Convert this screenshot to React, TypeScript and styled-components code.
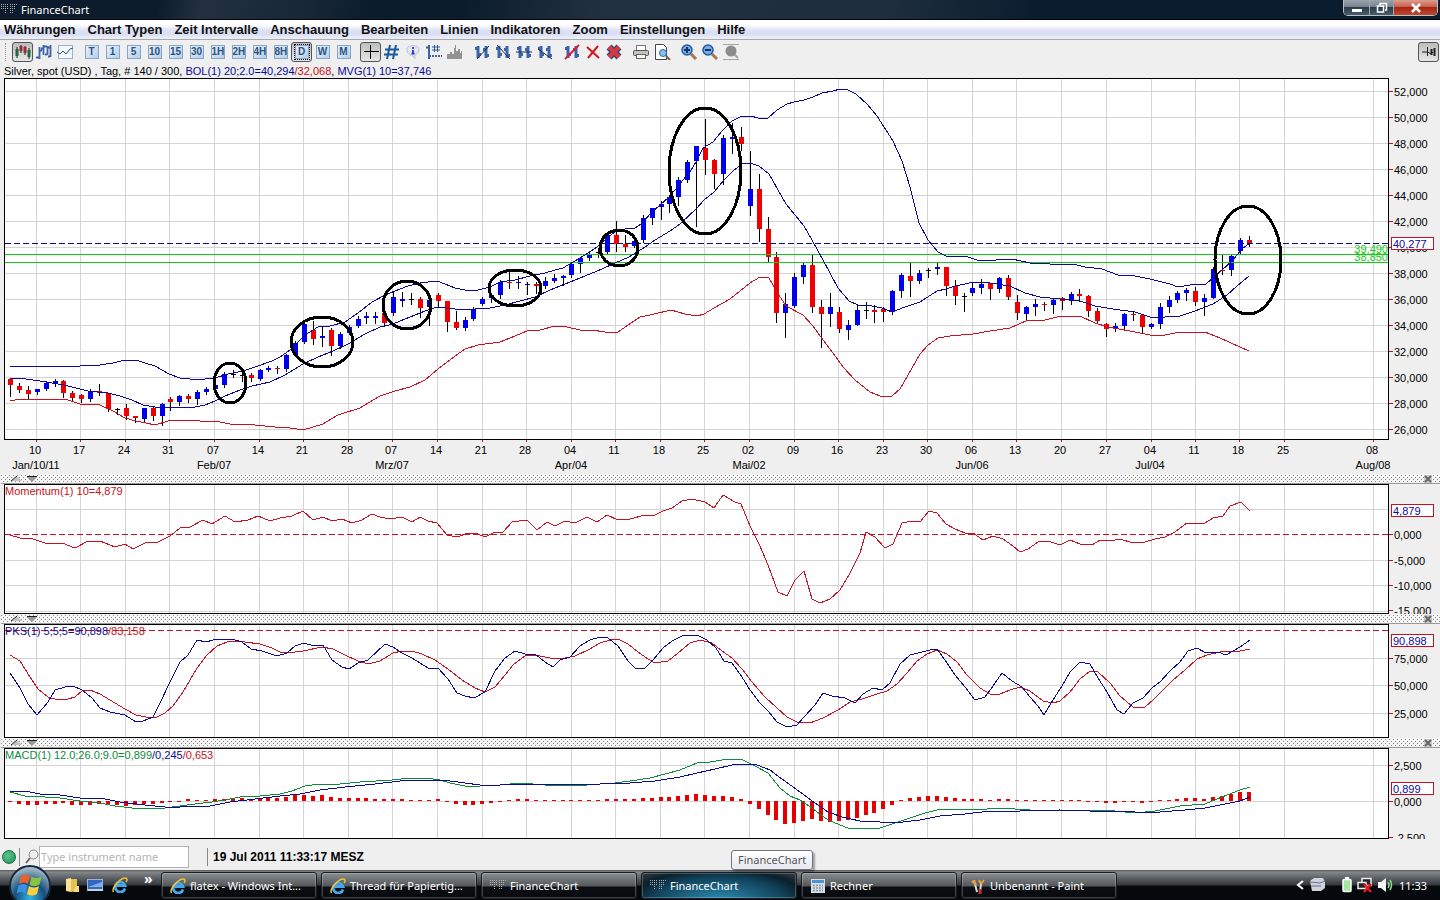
import React from "react";
import styled, { createGlobalStyle, css } from "styled-components";

const GlobalStyle = createGlobalStyle`
  * { box-sizing: border-box; }
  body { margin: 0; background: #efefef; font-family: "Liberation Sans", Arial, sans-serif; font-size: 11px; color: #000; }
  button { font: inherit; color: inherit; border: 0; background: none; padding: 0; margin: 0; }
  svg { display: block; flex: none; }
`;

const RED = "#c81020";
const BLUE = "#0a0a96";
const GREEN = "#0e8a3a";

/* ---------- series ---------- */

type Candle = [number, number, number, number, "b" | "r" | "k"];

// high, body top, body bottom, low, colour
const candles: Candle[] = [
  [379, 379, 385, 397, "r"], [383, 386, 390, 393, "r"], [386, 390, 394, 399, "r"], [389, 389, 392, 395, "b"],
  [381, 383, 389, 391, "b"], [379, 381, 384, 387, "b"], [380, 381, 393, 398, "r"], [391, 393, 398, 402, "r"],
  [394, 395, 399, 403, "r"], [389, 391, 399, 402, "b"], [384, 391, 393, 396, "r"], [393, 393, 409, 412, "r"],
  [408, 409, 410, 415, "k"], [404, 408, 416, 420, "r"], [416, 416, 418, 423, "r"], [408, 408, 419, 422, "b"],
  [407, 408, 416, 421, "r"], [403, 404, 416, 426, "b"], [397, 399, 402, 411, "r"], [395, 396, 402, 406, "b"],
  [394, 396, 399, 403, "r"], [390, 392, 399, 405, "b"], [387, 389, 392, 395, "b"], [384, 385, 389, 390, "b"],
  [372, 374, 385, 388, "b"], [370, 374, 375, 378, "k"], [373, 375, 376, 382, "k"], [373, 375, 378, 382, "r"],
  [369, 370, 379, 381, "b"], [366, 368, 370, 372, "b"], [366, 368, 369, 374, "r"], [354, 355, 369, 372, "b"],
  [341, 343, 355, 356, "b"], [321, 324, 342, 344, "b"], [321, 330, 339, 345, "r"], [327, 336, 338, 347, "b"],
  [328, 330, 346, 356, "r"], [332, 334, 346, 349, "b"], [325, 327, 333, 335, "b"], [316, 319, 326, 328, "b"],
  [312, 316, 318, 324, "b"], [312, 316, 318, 324, "b"], [311, 313, 323, 327, "r"], [292, 297, 313, 316, "b"],
  [292, 299, 301, 307, "b"], [293, 299, 300, 305, "k"], [297, 299, 308, 318, "r"], [299, 300, 307, 326, "b"],
  [293, 295, 301, 307, "r"], [301, 301, 322, 332, "r"], [311, 322, 328, 330, "r"], [317, 320, 328, 331, "b"],
  [307, 309, 319, 321, "b"], [297, 299, 304, 306, "b"], [293, 295, 298, 303, "b"], [280, 282, 295, 299, "b"],
  [272, 282, 283, 289, "r"], [276, 282, 283, 289, "b"], [282, 284, 285, 295, "b"], [282, 284, 286, 294, "r"],
  [277, 281, 286, 289, "b"], [274, 278, 281, 283, "b"], [275, 276, 278, 286, "b"], [263, 264, 275, 278, "b"],
  [257, 258, 264, 273, "b"], [251, 255, 258, 261, "b"], [248, 252, 253, 258, "k"], [233, 235, 252, 254, "b"],
  [221, 235, 244, 252, "r"], [235, 244, 247, 252, "r"], [238, 241, 246, 248, "b"], [215, 218, 240, 243, "b"],
  [208, 208, 218, 225, "b"], [201, 204, 207, 220, "b"], [195, 197, 204, 213, "b"], [177, 180, 197, 206, "b"],
  [160, 162, 180, 183, "b"], [146, 146, 161, 227, "b"], [119, 148, 160, 175, "r"], [159, 160, 174, 189, "r"],
  [135, 138, 174, 185, "b"], [123, 137, 139, 154, "b"], [127, 137, 144, 151, "r"], [151, 189, 206, 216, "b"],
  [174, 189, 229, 242, "r"], [217, 229, 257, 262, "r"], [252, 257, 313, 323, "r"], [293, 304, 313, 338, "b"],
  [273, 277, 306, 308, "b"], [263, 265, 277, 284, "b"], [255, 265, 307, 313, "r"], [300, 307, 314, 348, "r"],
  [293, 307, 314, 327, "b"], [307, 312, 329, 333, "r"], [320, 325, 330, 340, "b"], [305, 310, 325, 326, "b"],
  [302, 310, 311, 319, "k"], [305, 310, 312, 323, "r"], [307, 309, 312, 322, "r"], [290, 291, 312, 315, "b"],
  [273, 275, 291, 298, "b"], [263, 276, 281, 297, "r"], [270, 273, 281, 284, "b"], [268, 270, 271, 278, "k"],
  [263, 267, 269, 275, "b"], [267, 267, 286, 296, "r"], [280, 286, 296, 305, "r"], [293, 296, 297, 312, "k"],
  [282, 288, 293, 296, "b"], [279, 284, 288, 294, "b"], [283, 283, 289, 300, "r"], [277, 278, 289, 293, "b"],
  [275, 278, 297, 300, "r"], [295, 302, 313, 320, "r"], [306, 307, 314, 321, "b"], [299, 304, 307, 316, "b"],
  [302, 304, 305, 311, "r"], [299, 300, 305, 314, "b"], [297, 298, 301, 310, "r"], [292, 294, 301, 305, "b"],
  [289, 294, 296, 302, "r"], [295, 296, 311, 317, "r"], [308, 311, 321, 324, "r"], [323, 324, 329, 337, "r"],
  [323, 326, 328, 332, "b"], [313, 314, 326, 329, "b"], [312, 314, 315, 321, "r"], [314, 315, 327, 333, "r"],
  [323, 324, 327, 329, "b"], [303, 307, 324, 329, "b"], [296, 300, 307, 313, "b"], [291, 293, 300, 303, "b"],
  [288, 290, 293, 301, "b"], [287, 291, 302, 306, "r"], [294, 298, 302, 316, "b"], [267, 269, 298, 299, "b"],
  [255, 270, 271, 275, "r"], [255, 256, 270, 276, "b"], [238, 240, 251, 255, "b"], [236, 240, 243, 247, "r"],
];

const upperBand =
  "10,366 80,366 100,365 113,363 125,360 136,360 145,363 155,366 169,374 180,378 190,379 205,379 215,378 228,374 243,371 258,366 272,361 280,357 290,350 297,343 305,335 318,327 330,326 345,322 358,313 372,302 385,295 400,289 408,286 420,283 437,281 445,284 455,288 465,290 478,290 490,287 500,282 515,280 530,276 545,273 555,270 563,268 573,262 585,255 597,247 607,238 615,232 625,229 635,228 641,224 652,212 660,205 669,197 675,190 683,180 690,172 697,160 703,148 713,142 722,131 732,121 740,117 751,116 758,118 768,118 777,110 787,104 794,102 804,100 813,97 822,93 833,91 840,89 848,90 856,94 867,104 877,116 893,141 902,161 910,187 919,223 928,240 938,252 946,256 958,257 965,256 980,261 1012,259 1030,263 1050,264 1073,264 1085,267 1102,269 1118,275 1135,276 1150,279 1170,284 1178,287 1190,285 1206,284 1215,276 1222,270 1232,261 1242,249 1250,243";
const average =
  "10,378 26,379 40,381 52,383 64,385 76,388 88,391 108,393 120,396 132,400 143,405 155,407 170,407 190,408 205,405 215,401 225,396 240,390 252,386 270,382 285,375 303,364 318,357 333,351 348,344 365,334 380,327 393,324 400,321 415,315 425,311 437,307 455,309 475,309 490,308 505,305 520,301 535,297 550,290 565,284 585,276 602,269 615,263 629,257 645,247 655,240 670,231 680,224 697,208 704,200 714,192 724,180 733,171 742,164 750,163 759,166 769,174 786,204 804,226 812,240 823,260 838,288 849,301 858,305 872,306 882,308 892,312 905,307 920,302 937,291 946,289 955,286 965,284 973,282 990,283 1010,286 1025,293 1040,297 1060,299 1080,301 1095,306 1113,309 1135,312 1150,317 1165,317 1180,316 1195,311 1213,304 1227,295 1237,286 1249,276";
const lowerBand =
  "10,401 20,399 40,400 65,399 80,404 100,405 113,411 125,418 136,421 146,423 155,425 168,421 185,420 200,421 215,421 230,424 255,425 275,427 290,428 303,430 323,424 338,415 360,408 380,396 395,391 410,387 425,380 438,369 455,356 465,349 478,345 500,342 515,336 527,331 540,330 555,326 567,327 580,330 592,330 605,332 618,332 628,325 640,317 650,315 671,310 685,314 697,316 704,314 714,308 730,299 740,291 750,283 760,277 769,278 777,292 786,306 803,315 813,326 823,340 833,353 843,367 855,380 870,392 880,396 892,396 900,389 912,368 920,354 928,345 938,338 950,336 973,334 990,331 1010,328 1028,320 1045,320 1061,316 1080,316 1095,323 1108,327 1130,331 1150,335 1165,335 1180,332 1205,332 1220,338 1240,347 1249,351";
const momentum =
  "10,535 20,538 30,538 45,543 62,543 75,548 88,541 100,541 115,547 125,544 133,549 145,543 158,542 170,536 180,528 190,527 203,520 212,524 225,516 235,522 248,520 258,516 270,521 280,518 292,516 303,511 313,520 323,517 332,521 342,519 352,523 362,520 372,514 380,517 390,519 402,517 412,522 420,517 428,521 437,523 447,535 457,537 468,533 478,534 485,537 495,532 503,532 512,522 527,520 537,530 547,522 555,526 565,521 575,523 587,517 597,522 607,515 618,520 630,519 645,515 655,515 663,511 672,508 682,501 692,499 705,502 714,508 723,495 735,502 741,504 750,526 760,546 768,565 778,592 787,596 795,580 804,571 812,599 820,603 830,599 840,590 850,573 860,553 866,532 875,537 885,548 893,544 902,523 913,521 920,522 929,511 937,513 946,524 955,529 965,533 973,533 983,540 993,536 1003,539 1013,546 1020,552 1028,549 1038,542 1048,541 1060,545 1070,540 1080,544 1092,545 1100,540 1110,541 1120,539 1133,543 1145,542 1155,539 1165,537 1175,532 1187,523 1198,524 1205,523 1213,518 1223,516 1230,506 1241,502 1250,511";
const pksFast =
  "10,673 20,688 28,704 37,715 48,702 55,690 65,687 73,686 82,690 92,698 100,708 110,712 125,715 136,722 143,721 153,717 160,703 170,682 180,662 188,655 197,640 206,642 213,640 232,639 242,642 251,649 262,651 277,656 287,653 295,646 304,643 314,646 323,645 332,660 342,667 349,669 358,663 368,660 385,644 393,647 402,653 412,658 428,668 438,668 448,679 457,693 465,696 474,698 485,692 495,671 505,658 515,651 525,654 535,654 545,662 553,667 560,660 570,657 580,646 590,640 600,637 608,638 618,646 628,661 635,668 645,668 653,660 663,648 672,641 682,636 697,635 707,640 716,648 724,661 732,663 742,677 750,690 760,703 768,711 777,722 787,727 797,725 804,717 815,705 823,693 832,696 845,698 855,703 863,694 873,688 882,690 890,683 900,664 910,655 918,653 930,650 937,649 947,663 955,675 965,687 975,700 985,697 993,686 1002,673 1012,681 1022,687 1030,697 1038,706 1044,715 1053,700 1062,686 1070,672 1080,662 1090,664 1098,678 1107,692 1117,710 1124,714 1133,703 1143,698 1152,688 1160,682 1170,671 1180,662 1188,651 1197,648 1206,653 1218,652 1226,655 1233,651 1240,647 1250,640";
const pksSlow =
  "10,655 20,661 30,677 38,689 48,697 58,700 68,699 75,697 82,691 90,690 100,694 110,700 125,709 136,715 146,717 157,717 165,713 173,706 183,692 197,668 207,655 217,646 227,642 235,641 245,642 260,644 272,648 280,652 288,653 303,651 322,647 333,649 345,655 358,661 368,664 380,661 393,653 402,651 412,651 422,654 435,660 448,669 462,680 475,688 485,692 495,687 505,675 513,665 525,656 535,655 545,657 555,659 565,658 575,656 590,649 600,643 610,640 618,639 628,644 638,652 648,659 655,663 668,661 678,653 690,643 700,640 712,643 722,651 732,658 742,669 752,682 765,697 777,708 787,717 797,722 810,723 823,718 838,710 850,702 862,699 877,694 887,691 897,684 907,673 917,661 927,654 937,650 947,654 957,662 967,675 980,688 990,694 1000,694 1010,690 1020,687 1030,691 1043,701 1053,703 1060,701 1070,692 1080,679 1090,671 1098,672 1110,683 1120,696 1133,707 1145,707 1153,700 1163,690 1173,680 1185,670 1197,659 1207,655 1220,652 1240,651 1250,649";
const macdLine =
  "10,792 25,796 45,797 60,798 80,801 100,803 115,806 132,808 145,809 165,808 180,806 195,804 212,802 225,800 240,797 260,796 280,794 292,791 305,786 320,784 340,784 360,782 392,780 410,778 425,778 440,780 450,783 465,786 480,786 500,785 520,783 545,785 575,786 600,784 615,783 630,781 650,778 665,774 680,770 697,763 710,762 722,760 735,759 743,760 755,766 768,773 780,788 790,796 800,800 812,808 825,818 835,823 848,828 865,829 880,828 895,823 910,818 925,813 937,810 955,809 975,810 1000,808 1030,810 1060,810 1090,810 1115,811 1135,813 1155,811 1180,806 1205,804 1222,797 1240,790 1250,787";
const macdSignal =
  "10,791 25,791 40,794 60,795 80,798 105,799 120,802 145,805 165,807 180,807 210,806 230,802 255,799 280,796 300,794 320,790 345,787 375,784 400,781 430,780 450,781 465,783 480,785 500,785 530,784 570,784 600,784 630,783 655,781 680,777 697,773 715,769 732,765 745,764 757,765 770,770 782,779 800,792 815,803 828,812 842,817 860,821 880,822 903,822 920,820 940,816 965,814 990,811 1020,811 1060,810 1090,811 1115,811 1135,812 1160,812 1185,810 1205,808 1225,804 1240,801 1250,797";
const histogram = [
  -1, -3, -4, -4, -3, -3, -2, -4, -4, -4, -3, -4, -4, -5, -4, -3, -3, -2, -1, -1, 2, 1, 1, 2, 2, 3, 3, 2, 3, 3, 3, 4, 6, 6,
  5, 6, 4, 3, 3, 3, 3, 2, 2, 2, 2, 1, 1, 1, 2, -1, -3, -4, -4, -3, -2, -1, 1, 2, 2, 1, 1, 1, 1, 1, 1, 1, 1, 2, 2, 2, 2,
  3, 3, 4, 4, 5, 6, 7, 6, 5, 5, 4, 2, -3, -8, -14, -19, -23, -22, -20, -18, -20, -21, -20, -19, -17, -14, -12, -8, -4,
  1, 3, 4, 5, 5, 4, 3, 2, 2, 2, 1, 2, 2, 1, 1, 1, 1, 1, 1, 1, 1, -1, -1, -2, -2, -1, -1, -2, -1, 1, 1, 2, 3, 3, 2, 4,
  5, 7, 9, 9,
];

const gridX = [
  36, 80, 125, 169, 214, 259, 303, 348, 392, 437, 482, 526, 571, 615, 660, 704, 749, 794, 838, 883, 927, 972, 1016, 1061,
  1106, 1151, 1195, 1239, 1284, 1373,
];
const days =
  "10 17 24 31 07 14 21 28 07 14 21 28 04 11 18 25 02 09 16 23 30 06 13 20 27 04 11 18 25 08".split(" ");
const months: [number, string][] = [
  [36, "Jan/10/11"], [214, "Feb/07"], [392, "Mrz/07"], [571, "Apr/04"], [749, "Mai/02"], [972, "Jun/06"],
  [1150, "Jul/04"], [1373, "Aug/08"],
];
const markers: [number, number, number, number][] = [
  [230, 383, 16, 20], [322, 342, 31, 25], [407, 305, 24, 24], [515, 288, 26, 18], [619, 248, 19, 18], [705, 171, 36, 63],
  [1248, 260, 33, 54],
];
const X0 = 5;
const SPAN = 1383;
const barX = (i: number) => Math.round(10 + i * 8.912);

/* ---------- window frame ---------- */

const Window = styled.div`
  min-height: 100vh;
  display: flex;
  flex-direction: column;
`;
const TitleBar = styled.header`
  height: 20px;
  padding-left: 1px;
  display: flex;
  align-items: center;
  gap: 4px;
  color: #fff;
  font: 11px "Noto Sans", "Open Sans", sans-serif;
  border-bottom: 1px solid #04070b;
  background: linear-gradient(100deg, #0c1c2d 0 11%, #22303f 14%, #162635 22%, #0b1c2c 26%, #0b1c2c 32%, #223140 42%, #1d2d3d 62%, #0a1d2e 72%, #0a1d2e 100%);
`;
const Caption = styled.div`
  margin-left: auto;
  margin-right: 2px;
  align-self: flex-start;
  display: flex;
  height: 16px;
  border: 1px solid #b6bfc6;
  border-top: 0;
  border-radius: 0 0 5px 5px;
  overflow: hidden;
`;
const CaptionButton = styled.button<{ $wide?: boolean; $close?: boolean }>`
  width: ${(p) => (p.$close ? 43 : p.$wide ? 26 : 24)}px;
  display: flex;
  align-items: center;
  justify-content: center;
  border-right: ${(p) => (p.$close ? 0 : "1px solid #9aa5ae")};
  background: ${(p) =>
    p.$close
      ? "linear-gradient(#dc9c90, #c4614f 45%, #a82414 50%, #c04a30)"
      : "linear-gradient(#9aa4ac, #76828d 45%, #2c3c4b 50%, #4c5c6a)"};
`;
const MenuBar = styled.nav`
  height: 20px;
  padding-left: 4px;
  display: flex;
  align-items: center;
  gap: 12px;
  font: bold 13px "Liberation Sans", Arial, sans-serif;
  color: #111;
  background: linear-gradient(#fff 0 25%, #dce1f4 55%, #d9dff3 75%, #eef0fa);
  border-bottom: 1px solid #aaa;
`;
const ToolBar = styled.div`
  height: 24px;
  padding-left: 5px;
  display: flex;
  align-items: center;
  gap: 6px;
  background: #efefef;
`;
const Grip = styled.span`
  width: 1px;
  height: 18px;
  border-left: 1px dotted #999;
`;
const ToolGroup = styled.div`
  display: flex;
`;
const ToolButton = styled.button<{ $on?: boolean }>`
  width: 21px;
  height: 20px;
  display: flex;
  align-items: center;
  justify-content: center;
  border-radius: 3px;
  ${(p) =>
    p.$on &&
    css`
      border: 1px solid #555;
      background: linear-gradient(#bdbdbd, #e6e6e6);
    `}
`;
const Interval = styled.span<{ $on?: boolean }>`
  width: 14px;
  height: 14px;
  text-align: center;
  overflow: hidden;
  font: bold 10px/12px "Liberation Sans", Arial, sans-serif;
  color: #2b5480;
  background: linear-gradient(135deg, #e8f1fb, #b6cee8);
  border: 1px solid #86a6ca;
  outline: ${(p) => (p.$on ? "1px dotted #000" : "none")};
`;
const Pin = styled(ToolButton)`
  margin-left: auto;
  margin-right: 1px;
`;
const InfoLine = styled.p`
  margin: 0;
  height: 14px;
  line-height: 14px;
  padding-left: 4px;
`;
const Ink = styled.span<{ $c: string }>`
  color: ${(p) => p.$c};
`;

/* ---------- chart panels ---------- */

const Charts = styled.main`
  flex: 1;
`;
const PanelRow = styled.section`
  display: flex;
  margin-left: 4px;
`;
const Plot = styled.div<{ $h: number }>`
  position: relative;
  flex: 1;
  height: ${(p) => p.$h}px;
  border: 1px solid #000;
  background: #fff;
`;
const Drawing = styled.svg`
  width: 100%;
  height: 100%;
  overflow: hidden;
  shape-rendering: crispEdges;
`;
const PanelLabel = styled.span`
  position: absolute;
  left: 0;
  top: 0;
  line-height: 12px;
`;
const LevelLabel = styled.span<{ $top: number }>`
  position: absolute;
  right: 0;
  top: ${(p) => p.$top}px;
  line-height: 12px;
  color: #14c814;
`;
const Axis = styled.svg`
  flex: none;
  width: 51px;
  overflow: hidden;
  font-size: 11px;
  rect, path { shape-rendering: crispEdges; }
`;
const DateAxis = styled.svg`
  width: calc(100% - 57px);
  height: 34px;
  margin-left: 5px;
  overflow: visible;
  font-size: 11px;
  text-anchor: middle;
`;
const Splitter = styled.div`
  height: 10px;
  margin-left: 1px;
  padding: 0 8px 0 10px;
  display: flex;
  align-items: center;
  gap: 4px;
  border-bottom: 1px solid #999;
  background-color: #f4f4f4;
  background-image: conic-gradient(from 270deg at 1px 1px, #8a8a8a 90deg, transparent 0), conic-gradient(from 270deg at 1px 1px, #8a8a8a 90deg, transparent 0);
  background-size: 4px 4px;
  background-position: 0 1px, 2px 3px;
  svg:last-child { margin-left: auto; }
`;

const line = { fill: "none", vectorEffect: "non-scaling-stroke" } as const;

function Grid({ top, height, levels }: { top: number; height: number; levels: number[] }) {
  return (
    <g fill="#d4d4d4">
      {gridX.map((x) => (
        <rect key={x} x={x} y={top} width="1" height={height} />
      ))}
      {levels.map((y) => (
        <rect key={y} x={X0} y={y} width={SPAN} height="1" />
      ))}
    </g>
  );
}

interface PanelProps {
  top: number;
  height: number;
  levels: number[];
  labels: [number, string][];
  current: [number, string];
  title?: React.ReactNode;
  overlay?: React.ReactNode;
  children: React.ReactNode;
}

function Panel({ top, height, levels, labels, current, title, overlay, children }: PanelProps) {
  return (
    <PanelRow>
      <Plot $h={height}>
        <Drawing viewBox={`${X0} ${top + 1} ${SPAN} ${height - 2}`} preserveAspectRatio="none">
          <Grid top={top} height={height} levels={levels} />
          {children}
        </Drawing>
        {title && <PanelLabel>{title}</PanelLabel>}
        {overlay}
      </Plot>
      <Axis viewBox={`1389 ${top} 51 ${height}`} height={height}>
        {labels.map(([y, text]) => (
          <g key={text}>
            <path d={`M1389 ${y + 0.5}h4`} stroke={RED} />
            <text x="1394" y={y + 5}>{text}</text>
          </g>
        ))}
        <rect x="1391.5" y={current[0] - 5.5} width="42" height="12" fill="#fff" stroke={RED} />
        <text x="1393" y={current[0] + 5} fill={BLUE}>{current[1]}</text>
      </Axis>
    </PanelRow>
  );
}

function PanelSplitter() {
  return (
    <Splitter>
      <svg width="12" height="6"><path d="M0 5L6 0L11 5z" fill="#c4c4c4" /><path d="M0 5L6 0" stroke="#222" /></svg>
      <svg width="12" height="6"><path d="M0 1h10L5 6z" fill="#999" /><path d="M0 .5h10" stroke="#222" /></svg>
      <svg width="8" height="8"><rect width="8" height="8" fill="#ccc" /><path d="M1 1l6 6M7 1l-6 6" stroke="#666" strokeWidth="2" /></svg>
    </Splitter>
  );
}

/* ---------- status line and task bar ---------- */

const StatusBar = styled.footer`
  position: relative;
  height: 31px;
  display: flex;
  align-items: center;
  padding: 4px 0 0 2px;
`;
const Led = styled.span`
  width: 14px;
  height: 14px;
  border-radius: 50%;
  border: 1px solid #1c7044;
  background: radial-gradient(circle at 40% 40%, #5cc890, #189058);
`;
const Divider = styled.span`
  width: 1px;
  height: 18px;
  margin: 0 5px 0 3px;
  background: #888;
`;
const Search = styled.input`
  width: 150px;
  height: 22px;
  padding: 0 1px;
  border: 1px solid #b4b4b4;
  background: #fff;
  font: 11px "Noto Sans", "Open Sans", sans-serif;
  margin-right: 15px;
  &::placeholder { color: #b4b4b4; opacity: 1; }
`;
const Clock = styled.time`
  font: bold 12px "Liberation Sans", Arial, sans-serif;
`;
const Tooltip = styled.div`
  position: absolute;
  left: 731px;
  top: 11px;
  height: 20px;
  padding: 0 6px;
  line-height: 17px;
  border: 1px solid #767676;
  border-radius: 3px;
  background: linear-gradient(#fff, #e6e8f2);
  box-shadow: 2px 2px 2px #0005;
  color: #575757;
  font-family: "Noto Sans", sans-serif;
  font-size: 11px;
`;
const TaskBar = styled.div`
  height: 30px;
  display: flex;
  align-items: stretch;
  color: #fff;
  font: 11px "Noto Sans", "Open Sans", sans-serif;
  background: linear-gradient(#55595c, #85888b 2px, #5c6064 8px, #34383c 15px, #06090c 16px, #05080c);
`;
const StartButton = styled.button`
  width: 58px;
  height: 30px;
  overflow: visible;
  position: relative;
  svg { position: absolute; left: 8px; top: -5px; }
`;
const QuickLaunch = styled.div`
  width: 103px;
  padding: 0 8px 0 7px;
  display: flex;
  align-items: center;
  gap: 8px;
  b { margin-left: 8px; align-self: flex-start; font-size: 14px; line-height: 18px; }
`;
const Tasks = styled.div`
  display: flex;
  gap: 4px;
  padding: 2px 0 1px;
`;
const Task = styled.button<{ $on?: boolean }>`
  width: 156px;
  padding: 0 7px;
  display: flex;
  align-items: center;
  gap: 4px;
  white-space: nowrap;
  border: 1px solid #1a1d20;
  border-radius: 3px;
  box-shadow: inset 0 0 0 1px #ffffff38;
  background: ${(p) =>
    p.$on
      ? "radial-gradient(ellipse at 50% 110%, #2b8db4, #11425a 60%, #0a202c 80%, #0000), linear-gradient(#3a3e42, #22303a)"
      : "linear-gradient(#8b8e90, #54585b 13px, #0c0f13 14px, #07090d)"};
`;
const TaskIcon = styled.span`
  width: 17px;
  display: flex;
  justify-content: center;
`;
const Tray = styled.div`
  margin-left: auto;
  padding-right: 13px;
  display: flex;
  align-items: center;
  gap: 4px;
`;
const TrayClock = styled.time`
  margin-left: 2px;
`;
const Gap = styled.span`
  width: 7px;
`;

/* ---------- icons ---------- */

const C = "#3c64a8";
const icon = (children: React.ReactNode, w = 18, h = 16) => (
  <svg width={w} height={h} viewBox={`0 0 ${w} ${h}`} fill="none">{children}</svg>
);

const CandleIcon = icon(
  <>
    <path d="M3 3v11M7 1v8M11 2v9M15 4v11" stroke="#222" />
    <path d="M3 5v7M15 6v7" stroke="#1d6b3a" strokeWidth="3" />
    <path d="M7 2v5M11 3v6" stroke="#a02838" strokeWidth="3" />
  </>
);
const BarsIcon = icon(
  <path d="M4.500 3v12M1 13.500h3M4 6.500h3M8.500 1v10M6 4.500h2M8 2.500h4M12.500 2v9M10 10.500h2M15.500 1v12M13 3.500h2M13 12.500h2" stroke={C} strokeWidth="1.800" />
);
const LineIcon = icon(
  <>
    <rect x="2.500" y="1.500" width="14" height="13" stroke="#9ab4d4" fill="#f4f8fc" />
    <path d="M1 8l3 2 3-3 3 3 4-5 3-1" stroke="#2c5888" />
  </>
);
const CrossIcon = icon(<path d="M8.500 1v14M2 7.500h15" stroke="#000" />);
const HashIcon = icon(<path d="M7 1L4 15M13 1l-3 14M2 5.500h14M1 10.500h14" stroke="#185a9c" strokeWidth="2" />);
const InfoIcon = icon(
  <>
    <path d="M9 1.500c4 0 6 2 6 4.500s-2 4-4 4.500v4L8 11c-3 0-5-2-5-5s2-4.500 6-4.500z" fill="#e4e7f2" stroke="#bcc0d0" />
    <path d="M9 3v2M9 6v4M7.500 9.500h3" stroke="#2838d8" strokeWidth="1.800" />
  </>
);
const BarHashIcon = icon(
  <>
    <path d="M4 1v14M1 3.500h3M4 12h2" stroke={C} strokeWidth="2" />
    <path d="M9.500 1v7M12.500 1v7M7 3h8M7 6h8" stroke="#2c5c98" />
    <path d="M7 12h10" stroke={C} strokeWidth="2" strokeDasharray="2 1" />
  </>
);
const VolumeIcon = icon(<path d="M1 15v-5h3V8h2v2h2V4h1V1h1v6h2V5h2v4h1V7h1v8z" fill="#929292" />);
const pair = <path d="M5 2v12M2 4.500h3M5 10.500h3M13 2v12M10 5.500h3M13 11.500h3" stroke={C} strokeWidth="3" />;
const TrendIcon = icon(<>{pair}<path d="M4 15L16 2" stroke="#1c2c50" /></>);
const DownIcon = icon(<>{pair}<path d="M3 1l13 14" stroke="#1c2c50" /></>);
const LevelIcon = icon(<>{pair}<path d="M1 8h16" stroke="#1c2c50" /></>);
const RayIcon = icon(<>{pair}<path d="M2 5l14 10" stroke="#1c2c50" /></>);
const CutIcon = icon(<>{pair}<path d="M2 15L16 1" stroke="#d81c3c" strokeWidth="2" /></>);
const DeleteIcon = icon(<path d="M3 3l12 11M14 2L4 14" stroke="#d01828" strokeWidth="2" />);
const DeleteAllIcon = icon(
  <>
    <path d="M4 3l10 10M14 3L4 13" stroke="#384a80" strokeWidth="7" />
    <path d="M4 3l10 10M14 3L4 13" stroke="#d83840" strokeWidth="4" />
  </>
);
const PrintIcon = icon(
  <>
    <rect x="4.500" y="1.500" width="9" height="5" fill="#fff" stroke="#777" />
    <rect x="1.500" y="6.500" width="15" height="5" rx="1" fill="#c0c4c0" stroke="#555" />
    <rect x="4.500" y="10.500" width="9" height="4" fill="#f4f4f4" stroke="#666" />
  </>
);
const PreviewIcon = icon(
  <>
    <path d="M2.500 .5h8l3 3v12h-11z" fill="#fff" stroke="#445" />
    <circle cx="10" cy="9" r="3.500" fill="#8cc0ec" stroke="#2c68a8" />
    <path d="M13 12l4 4" stroke="#786048" strokeWidth="2" />
  </>
);
const zoomIcon = (plus: boolean) =>
  icon(
    <>
      <path d="M11 10l5 5" stroke="#a87848" strokeWidth="3" />
      <circle cx="7" cy="6" r="5" fill="#74b0e8" stroke="#2458a0" strokeWidth="1.500" />
      <path d={plus ? "M4 6h6M7 3v6" : "M4 6h6"} stroke="#143468" strokeWidth="2" />
    </>
  );
const ZoomResetIcon = icon(
  <>
    <path d="M1 .5h16M1 15.500h16" stroke="#a4a4a4" />
    <path d="M12 10l4 4" stroke="#a4a4a4" strokeWidth="2" />
    <circle cx="9" cy="7" r="5.500" fill="#8c8c8c" />
  </>
);
const PinIcon = icon(
  <>
    <path d="M1 8h5M6.500 3v9M7 8l3 2 2-2" stroke="#222" />
    <path d="M10.500 5v6M13.500 4v8" stroke="#222" strokeWidth="2" />
  </>,
  16
);
const DotsIcon = (
  <svg width="16" height="14">
    {[0, 1, 2, 3, 4].map((r) => (
      <path key={r} d={`M${r > 2 ? 4 : 0} ${r * 2 + 1.5}h${r > 2 ? 2 : 7}M9 ${r * 2 + 1.5}h${7 - r}`} stroke="#a8aeb4" strokeDasharray="1 1" />
    ))}
  </svg>
);
const IeIcon = (
  <svg width="16" height="16" viewBox="0 0 16 16" fill="none">
    <path d="M13 11.500A5 5 0 1 1 13 8.500H4" stroke="#45a8ec" strokeWidth="2.800" />
    <path d="M1.500 15C-1 11 10-1 14.500 1.500c1 .8 .6 2-.5 3.500" stroke="#f4c22c" strokeWidth="1.500" />
  </svg>
);
const StartIcon = (
  <svg width="43" height="35" viewBox="0 0 43 35">
    <defs>
      <radialGradient id="orb" cx="50%" cy="80%" r="75%">
        <stop offset="0" stopColor="#34b4e8" />
        <stop offset=".5" stopColor="#174e7c" />
        <stop offset="1" stopColor="#a4bccb" />
      </radialGradient>
    </defs>
    <circle cx="22" cy="21" r="20" fill="url(#orb)" stroke="#16283a" strokeWidth="2" />
    <path d="M13 11c3-2 6-2 9 0l-2 8c-3-2-6-2-9 0z" fill="#e8602c" />
    <path d="M23.500 11.500c3 2 6 2 10 0l-2 8c-4 2-7 2-10 0z" fill="#88c440" />
    <path d="M10.500 20.500c3-2 6-2 9 0l-2 8c-3-2-6-2-9 0z" fill="#3c90e0" />
    <path d="M21 21c3 2 6 2 10 0l-2 8c-4 2-7 2-10 0z" fill="#fcd03c" />
  </svg>
);
const FolderIcon = (
  <svg width="14" height="16"><path d="M1 2l5-1v14l-5-1z" fill="#f8e494" /><path d="M6 2h6v12l-6 1z" fill="#e4c050" /><path d="M11 9h3v6H8z" fill="#f4dc84" /></svg>
);
const DesktopIcon = (
  <svg width="17" height="14"><rect x=".5" y="1.500" width="15" height="11" fill="#3468c0" stroke="#9cb4d4" /><path d="M1 9L15 4v5z" fill="#7cb0e8" /><path d="M1 12h15" stroke="#c4d0dc" strokeWidth="2" /></svg>
);
const CalcIcon = (
  <svg width="14" height="14"><rect width="14" height="14" fill="#d4dce4" /><rect x="1" y="1" width="12" height="3" fill="#4c94d8" /><path d="M2 6.500h10M2 9h10M2 11.500h10" stroke="#8c98a4" strokeWidth="1.500" strokeDasharray="2 1" /></svg>
);
const PaintIcon = (
  <svg width="14" height="16" fill="none"><path d="M4 6l2 8M10 6L9 14" stroke="#ddd" strokeWidth="2" /><path d="M1 3l4 4M3 2l2 5M8 2l2 4M13 2l-3 4" stroke="#e8a040" strokeWidth="2" /><path d="M9 11v5" stroke="#b83828" strokeWidth="3" /></svg>
);

const toolGroups: { label: string; on?: boolean; glyph?: React.ReactNode }[][] = [
  [{ label: "Kerzen", on: true, glyph: CandleIcon }, { label: "Balken", glyph: BarsIcon }, { label: "Linie", glyph: LineIcon }],
  ["T", "1", "5", "10", "15", "30", "1H", "2H", "4H", "8H", "D", "W", "M"].map((label) => ({ label, on: label === "D" })),
  [
    { label: "Fadenkreuz", on: true, glyph: CrossIcon }, { label: "Raster", glyph: HashIcon }, { label: "Info", glyph: InfoIcon },
    { label: "Werte", glyph: BarHashIcon }, { label: "Volumen", glyph: VolumeIcon },
  ],
  [
    { label: "Trendlinie", glyph: TrendIcon }, { label: "Linie abwärts", glyph: DownIcon },
    { label: "Horizontale", glyph: LevelIcon }, { label: "Strahl", glyph: RayIcon },
  ],
  [{ label: "Trennen", glyph: CutIcon }, { label: "Löschen", glyph: DeleteIcon }, { label: "Alle löschen", glyph: DeleteAllIcon }],
  [{ label: "Drucken", glyph: PrintIcon }, { label: "Vorschau", glyph: PreviewIcon }],
  [{ label: "Vergrößern", glyph: zoomIcon(true) }, { label: "Verkleinern", glyph: zoomIcon(false) }, { label: "Zoom zurücksetzen", glyph: ZoomResetIcon }],
];
const menus = ["Währungen", "Chart Typen", "Zeit Intervalle", "Anschauung", "Bearbeiten", "Linien", "Indikatoren", "Zoom", "Einstellungen", "Hilfe"];
const tasks: { text: string; glyph: React.ReactNode; on?: boolean }[] = [
  { text: "flatex - Windows Int...", glyph: IeIcon },
  { text: "Thread für Papiertig...", glyph: IeIcon },
  { text: "FinanceChart", glyph: DotsIcon },
  { text: "FinanceChart", glyph: DotsIcon, on: true },
  { text: "Rechner", glyph: CalcIcon },
  { text: "Unbenannt - Paint", glyph: PaintIcon },
];
const priceLabels: [number, string][] = Array.from({ length: 14 }, (_, i) => [91 + i * 26, `${52 - i * 2},000`]);

function Candles() {
  return (
    <>
      {candles.map(([hi, top, bottom, lo, c], i) => (
        <g key={i}>
          <rect x={barX(i)} y={hi} width="1" height={lo - hi} fill="#000" />
          <rect x={barX(i) - 2} y={top} width="5" height={bottom - top} fill={c === "b" ? "#0000f0" : c === "r" ? "#f00000" : "#000"} />
        </g>
      ))}
    </>
  );
}

function DateScale() {
  const at = (x: number) => `${((x - X0) / SPAN) * 100}%`;
  return (
    <DateAxis>
      {gridX.map((x, i) => (
        <g key={x}>
          <rect x={at(x)} y="0" width="1" height="2" fill={RED} />
          <text x={at(x - 1)} y="14">{days[i]}</text>
        </g>
      ))}
      {months.map(([x, text]) => (
        <text key={text} x={at(x)} y="29">{text}</text>
      ))}
    </DateAxis>
  );
}

export default function App() {
  return (
    <Window>
      <GlobalStyle />
      <TitleBar>
        {DotsIcon}
        <span>FinanceChart</span>
        <Caption>
          <CaptionButton $wide aria-label="Minimieren">
            <svg width="12" height="12"><rect x="1" y="7" width="10" height="3" fill="#fff" /></svg>
          </CaptionButton>
          <CaptionButton aria-label="Wiederherstellen">
            <svg width="12" height="12" fill="none" stroke="#fff" strokeWidth="1.500"><path d="M4 3V1.500h6.500V8H9" /><rect x="1.500" y="4" width="6" height="6" /></svg>
          </CaptionButton>
          <CaptionButton $close aria-label="Schließen">
            <svg width="12" height="12"><path d="M2 2l8 8M10 2l-8 8" stroke="#fff" strokeWidth="2.500" /></svg>
          </CaptionButton>
        </Caption>
      </TitleBar>
      <MenuBar>
        {menus.map((m) => (
          <button key={m}>{m}</button>
        ))}
      </MenuBar>
      <ToolBar>
        <Grip />
        {toolGroups.map((group, g) => (
          <ToolGroup key={g}>
            {group.map(({ label, on, glyph }) => (
              <ToolButton key={label} $on={on} aria-label={label}>
                {glyph ?? <Interval $on={on}>{label}</Interval>}
              </ToolButton>
            ))}
          </ToolGroup>
        ))}
        <Pin $on aria-label="Anheften">{PinIcon}</Pin>
      </ToolBar>
      <InfoLine>
        Silver, spot (USD) , Tag, # 140 / 300, <Ink $c={BLUE}>BOL(1) 20;2.0=40,294</Ink>
        <Ink $c={RED}>/32,068</Ink>, <Ink $c={BLUE}>MVG(1) 10=37,746</Ink>
      </InfoLine>
      <Charts>
        <Panel
          top={78}
          height={362}
          levels={priceLabels.map(([y]) => y)}
          labels={priceLabels}
          current={[243, "40,277"]}
          overlay={
            <>
              <LevelLabel $top={164}>39,490</LevelLabel>
              <LevelLabel $top={172}>38,850</LevelLabel>
            </>
          }
        >
          <Candles />
          <path d="M5 243.500H1388" stroke={BLUE} strokeDasharray="6 3" {...line} />
          <path d="M5 254.500H1388M5 262.500H1388" stroke="#14c814" {...line} />
          <polyline points={lowerBand} stroke={RED} {...line} />
          <polyline points={upperBand} stroke={BLUE} {...line} />
          <polyline points={average} stroke={BLUE} {...line} />
          {markers.map(([cx, cy, rx, ry]) => (
            <ellipse key={cx} cx={cx} cy={cy} rx={rx} ry={ry} stroke="#000" strokeWidth="3" {...line} />
          ))}
        </Panel>
        <DateScale />
        <PanelSplitter />
        <Panel
          top={484}
          height={130}
          levels={[509, 560, 585, 611]}
          labels={[[534, "0,000"], [560, "-5,000"], [585, "-10,000"], [610, "-15,000"]]}
          current={[510, "4,879"]}
          title={<Ink $c={RED}>Momentum(1) 10=4,879</Ink>}
        >
          <path d="M5 534.500H1388" stroke={RED} strokeDasharray="6 3" {...line} />
          <polyline points={momentum} stroke={RED} {...line} />
        </Panel>
        <PanelSplitter />
        <Panel
          top={624}
          height={114}
          levels={[658, 685, 713]}
          labels={[[658, "75,000"], [685, "50,000"], [713, "25,000"]]}
          current={[640, "90,898"]}
          title={<><Ink $c={BLUE}>PKS(1) 5;5;5=90,898</Ink><Ink $c={RED}>/83,158</Ink></>}
        >
          <path d="M5 630.500H1388" stroke={RED} strokeDasharray="6 3" {...line} />
          <polyline points={pksSlow} stroke={RED} {...line} />
          <polyline points={pksFast} stroke={BLUE} {...line} />
        </Panel>
        <PanelSplitter />
        <Panel
          top={748}
          height={91}
          levels={[765, 801]}
          labels={[[765, "2,500"], [801, "0,000"], [837, "-2,500"]]}
          current={[788, "0,899"]}
          title={<><Ink $c={GREEN}>MACD(1) 12.0;26.0;9.0=0,899</Ink><Ink $c={BLUE}>/0,245</Ink><Ink $c={RED}>/0,653</Ink></>}
        >
          {histogram.map((v, i) => (
            <rect key={i} x={barX(i) - 2} y={v > 0 ? 801 - v : 801} width="4" height={Math.abs(v)} fill="#e80000" />
          ))}
          <polyline points={macdLine} stroke={GREEN} {...line} />
          <polyline points={macdSignal} stroke={BLUE} {...line} />
        </Panel>
      </Charts>
      <StatusBar>
        <Led />
        <Divider />
        <svg width="14" height="16" fill="none"><circle cx="8.500" cy="5.500" r="4.500" stroke="#888" /><path d="M5 9l-4 5" stroke="#666" strokeWidth="2" /></svg>
        <Search aria-label="Instrument" placeholder="Type instrument name" />
        <Divider />
        <Clock>19 Jul 2011 11:33:17 MESZ</Clock>
        <Tooltip role="tooltip">FinanceChart</Tooltip>
      </StatusBar>
      <TaskBar>
        <StartButton aria-label="Start">{StartIcon}</StartButton>
        <QuickLaunch>
          {FolderIcon}
          {DesktopIcon}
          {IeIcon}
          <b>»</b>
        </QuickLaunch>
        <Tasks>
          {tasks.map(({ text, glyph, on }, i) => (
            <Task key={i} $on={on}>
              <TaskIcon>{glyph}</TaskIcon>
              <span>{text}</span>
            </Task>
          ))}
        </Tasks>
        <Tray>
          <svg width="9" height="10" fill="none"><path d="M7 1L2 5l5 4" stroke="#fff" strokeWidth="2" /></svg>
          <svg width="17" height="16"><path d="M1 4l4-3h9l2 4v6l-4 3H3z" fill="#cdd2dc" /><path d="M1 5l10 1 5-2M2 9h10" stroke="#68708c" fill="none" /></svg>
          <Gap />
          <svg width="12" height="16" fill="none"><rect x="2" y="2.500" width="8" height="12" rx="1" fill="#a4e8a4" stroke="#fff" strokeWidth="1.500" /><path d="M4 1h4" stroke="#fff" strokeWidth="2" /></svg>
          <svg width="16" height="16" fill="none"><rect x="5" y="1.500" width="9" height="7" fill="#222" stroke="#eee" strokeWidth="1.500" /><rect x="1" y="5.500" width="8" height="6" fill="#222" stroke="#eee" strokeWidth="1.500" /><path d="M7 7l7 8M14 7l-7 8" stroke="#e81818" strokeWidth="2.500" /></svg>
          <svg width="16" height="16" fill="none"><path d="M1 5h3l5-4v14l-5-4H1z" fill="#f4f4f4" /><path d="M11 5q2 3 0 6M13 3q3 5 0 10" stroke="#8cd88c" strokeWidth="1.500" /></svg>
          <TrayClock>11:33</TrayClock>
        </Tray>
      </TaskBar>
    </Window>
  );
}
